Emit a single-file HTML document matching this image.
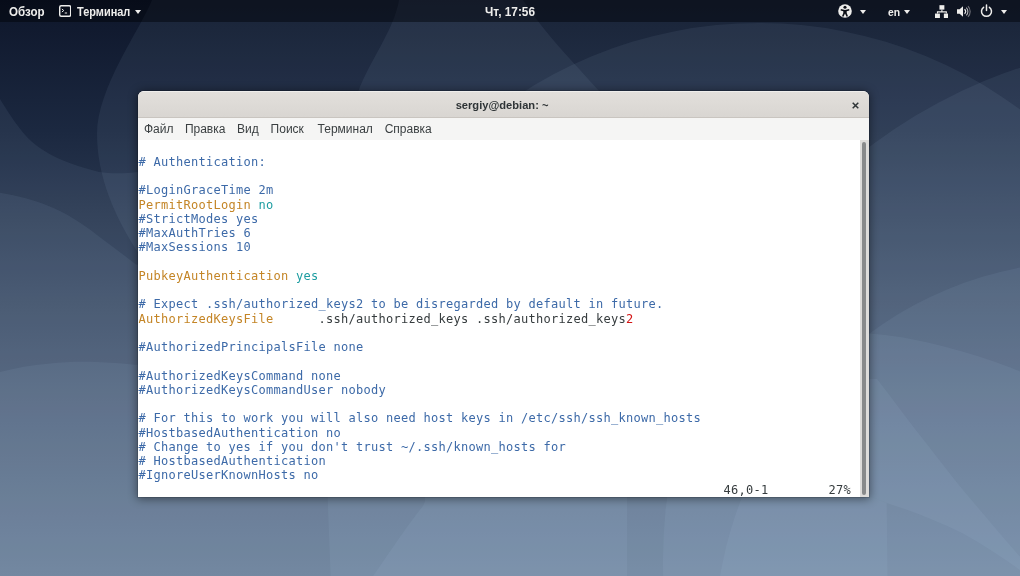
<!DOCTYPE html>
<html lang="ru">
<head>
<meta charset="utf-8">
<title>sergiy@debian: ~</title>
<style>
html,body{margin:0;padding:0;}
body{width:1020px;height:576px;overflow:hidden;position:relative;background:#4a5a78;font-family:"Liberation Sans","DejaVu Sans",sans-serif;}
#wall{position:absolute;left:0;top:0;width:1020px;height:576px;display:block;}
#topbar{will-change:transform;position:absolute;left:0;top:0;width:1020px;height:22px;background:rgba(0,2,6,0.46);color:#eeeeec;font-weight:bold;font-size:12px;}
#topbar span.t{position:absolute;top:0;line-height:24px;white-space:nowrap;transform-origin:0 50%;display:inline-block;}
#topbar svg{position:absolute;}
.arr{position:absolute;width:0;height:0;border-left:3.5px solid transparent;border-right:3.5px solid transparent;border-top:4px solid #eeeeec;top:9.6px;}
#win{will-change:transform;position:absolute;left:138px;top:90.7px;width:730.5px;height:406.3px;border-radius:6px 6px 0 0;background:#fff;box-shadow:0 0 0 1px rgba(0,0,0,0.13),0 1px 10px 1px rgba(0,0,0,0.45);overflow:hidden;}
#title{position:absolute;left:0;top:0;width:100%;height:26.7px;background:linear-gradient(#e2dfdb,#d9d6d2);border-bottom:1px solid #c9c5c0;border-top:1px solid #efeeec;box-sizing:border-box;}
#title .tt{position:absolute;left:0;width:100%;text-align:center;top:-0.2px;line-height:27px;font-weight:bold;font-size:11.5px;color:#2e3436;transform:translateX(-1.2px) scaleX(0.968);}
#menu{position:absolute;left:0;top:26.7px;width:100%;height:22.3px;background:#f5f5f4;font-size:12px;color:#3a3f41;}
#menu span{position:absolute;top:0;line-height:23px;white-space:nowrap;}
#term{position:absolute;left:0;top:49px;width:723px;height:357px;background:#fff;}
#term pre{margin:0;position:absolute;left:0.4px;top:0.55px;font-family:"DejaVu Sans Mono","Liberation Mono",monospace;font-size:12px;letter-spacing:0.276px;line-height:14.25px;color:#363c3e;white-space:pre;}
.c{color:#3d6aa8}.k{color:#c48526}.v{color:#1d9da1}.r{color:#d41414}
#sb{position:absolute;right:0;top:49px;width:8.7px;height:357.3px;background:#dddcda;}
#sb i{position:absolute;left:2.2px;top:1.9px;width:4px;height:353px;border-radius:2px;background:#888a8b;}
</style>
</head>
<body>
<svg id="wall" viewBox="0 0 1020 576">
<defs>
<linearGradient id="bg" x1="0" y1="0" x2="0" y2="576" gradientUnits="userSpaceOnUse">
<stop offset="0" stop-color="rgb(14,22,42)"/>
<stop offset="0.226" stop-color="rgb(27,40,64)"/>
<stop offset="0.52" stop-color="rgb(57,72,96)"/>
<stop offset="0.73" stop-color="rgb(77,93,117)"/>
<stop offset="1" stop-color="rgb(98,117,141)"/>
</linearGradient>
</defs>
<rect width="1020" height="576" fill="url(#bg)"/>
<g fill="rgb(195,225,250)" fill-opacity="0.065">
<!-- A: big ellipse top-left -->
<path d="M152 0C140 30 97 88 97 134C97 180 118 226 150 270L640 270C640 200 625 120 600 92C575 64 545 34 523 0Z"/>
<!-- B: right of S-curve -->
<path d="M399 0C394 30 370 60 358 92C340 150 340 300 380 400C420 480 430 495 423 506C400 535 385 560 373 576L1020 576L1020 0Z"/>
<!-- C1 -->
<path d="M327.600 497L330.600 576L1200 576L1196 460A437 437 0 0 0 759 23A437 437 0 0 0 322 460Z"/>
<!-- C2 -->
<circle cx="1183" cy="561.5" r="520"/>
<!-- C3 -->
<circle cx="1092" cy="637.6" r="377"/>
<!-- L5 -->
<path d="M0 99C8 112 14 121 21 130C28 139 35 145 43 150C60 161 80 167 99 172C112 174 126 173.500 138 172L627 172L627 576L0 576Z"/>
<!-- L6 -->
<path d="M0 192.800C18 196 34 200 48.600 206C66 213 82 223 97 235C110 245 124 255 136 264.500L885 335C910 338 932 343 953 349C976 355 1000 363 1020 371.500L1020 576L0 576Z"/>
<!-- L7 -->
<path d="M0 372C16 368 32 365 48 363.800C64 362 80 361.500 96 362C110 362.500 122 363.500 134 364.700L500 364.700L860 492L886.700 503L887.500 576L0 576Z"/>
<!-- W -->
<path d="M877 379C890 396 902 412 915 429C930 448 944 466 958 484C980 510 1000 534 1020 556.700L1020 570C1000 556 982 544 963 533.600C938 521 912 511 886.700 503L860 492L860 379Z"/>
</g>
</svg>
<div id="topbar">
<span class="t" style="left:9.2px;transform:scaleX(0.965)">Обзор</span>
<svg style="left:59px;top:4.9px" width="12.4" height="12" viewBox="0 0 13 12" preserveAspectRatio="none"><rect x="0.75" y="0.75" width="11.5" height="10.5" rx="1.5" fill="none" stroke="#eeeeec" stroke-width="1.5"/><path d="M3 4l2 1.5L3 7" fill="none" stroke="#eeeeec" stroke-width="1"/><path d="M6 8h2.5" stroke="#eeeeec" stroke-width="1"/></svg>
<span class="t" style="left:76.5px;transform:scaleX(0.913)">Терминал</span>
<i class="arr" style="left:135px"></i>
<span class="t" style="left:485px;transform:scaleX(0.985)">Чт, 17:56</span>
<svg style="left:838.2px;top:4px" width="14" height="14" viewBox="0 0 14 14"><circle cx="7" cy="7" r="6.8" fill="#eeeeec"/><circle cx="7" cy="3.2" r="1.55" fill="#0b0e16"/><path d="M2.9 5.1L7 5.9l4.100-.8.300 1.300-2.700.800v1.800l1.300 3.200-1.400.600L7 9.400l-1.600 3.400-1.400-.600 1.300-3.200V7.200L2.600 6.400z" fill="#0b0e16"/></svg>
<i class="arr" style="left:860px"></i>
<span class="t" style="left:887.5px;font-size:11.5px;transform:scaleX(0.9)">en</span>
<i class="arr" style="left:904px"></i>
<svg style="left:934.6px;top:4.9px" width="13.8" height="13.2" viewBox="0 0 14 13"><rect x="4.5" y="0" width="5" height="4.5" fill="#eeeeec"/><rect x="0" y="8.5" width="5" height="4.5" fill="#eeeeec"/><rect x="9" y="8.5" width="5" height="4.5" fill="#eeeeec"/><path d="M7 4.5v2.3M2.5 8.5V6.8h9v1.7" fill="none" stroke="#eeeeec" stroke-width="1.1"/></svg>
<svg style="left:957px;top:5px" width="14" height="13" viewBox="0 0 14 13"><path d="M0 4.3h2.6L6 1.2v10.6L2.6 8.7H0z" fill="#eeeeec"/><path d="M7.6 4.2a3.3 3.3 0 010 4.6" fill="none" stroke="#eeeeec" stroke-width="1.1"/><path d="M9.3 2.6a5.6 5.6 0 010 7.8" fill="none" stroke="#eeeeec" stroke-width="1.1" opacity=".75"/><path d="M11 1.1a7.8 7.8 0 010 10.8" fill="none" stroke="#eeeeec" stroke-width="1.1" opacity=".45"/></svg>
<svg style="left:980.2px;top:3.8px" width="13" height="14" viewBox="0 0 13 14"><path d="M3.6 3.3a5 5 0 105.8 0" fill="none" stroke="#eeeeec" stroke-width="1.5" stroke-linecap="round"/><path d="M6.5 1v5.6" stroke="#eeeeec" stroke-width="1.5" stroke-linecap="round"/></svg>
<i class="arr" style="left:1001.3px"></i>
</div>
<div id="win">
<div id="title"><div class="tt">sergiy@debian: ~</div>
<svg style="position:absolute;left:713.5px;top:10px" width="7" height="7" viewBox="0 0 7 7"><path d="M0.7 0.7l5.6 5.6M6.3 0.7L0.7 6.3" stroke="#2e3436" stroke-width="1.5"/></svg>
</div>
<div id="menu">
<span style="left:6px">Файл</span><span style="left:46.9px">Правка</span><span style="left:99px">Вид</span><span style="left:132.6px">Поиск</span><span style="left:179.6px">Терминал</span><span style="left:246.7px">Справка</span>
</div>
<div id="term"><pre>

<span class="c"># Authentication:</span>

<span class="c">#LoginGraceTime 2m</span>
<span class="k">PermitRootLogin</span> <span class="v">no</span>
<span class="c">#StrictModes yes</span>
<span class="c">#MaxAuthTries 6</span>
<span class="c">#MaxSessions 10</span>

<span class="k">PubkeyAuthentication</span> <span class="v">yes</span>

<span class="c"># Expect .ssh/authorized_keys2 to be disregarded by default in future.</span>
<span class="k">AuthorizedKeysFile</span>      .ssh/authorized_keys .ssh/authorized_keys<span class="r">2</span>

<span class="c">#AuthorizedPrincipalsFile none</span>

<span class="c">#AuthorizedKeysCommand none</span>
<span class="c">#AuthorizedKeysCommandUser nobody</span>

<span class="c"># For this to work you will also need host keys in /etc/ssh/ssh_known_hosts</span>
<span class="c">#HostbasedAuthentication no</span>
<span class="c"># Change to yes if you don't trust ~/.ssh/known_hosts for</span>
<span class="c"># HostbasedAuthentication</span>
<span class="c">#IgnoreUserKnownHosts no</span>
                                                                              46,0-1        27%</pre></div>
<div id="sb"><i></i></div>
</div>
</body>
</html>
